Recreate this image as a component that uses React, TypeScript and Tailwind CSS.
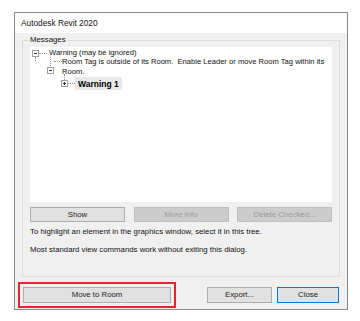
import React from 'react'

const font = { fontFamily: '"Liberation Sans", Arial, sans-serif' }

function Btn({ label, className = '' }: { label: string; className?: string }) {
  return (
    <div className={'flex items-center justify-center border text-[7.8px] leading-none ' + className}>
      {label}
    </div>
  )
}

function ExpandBox({ plus }: { plus?: boolean }) {
  return (
    <span className="relative inline-block w-[7px] h-[7px] border border-[#a0a0a0] bg-white shrink-0">
      <span className="absolute left-[1px] right-[1px] top-[2px] h-px bg-[#333]" />
      {plus && <span className="absolute top-[1px] bottom-[1px] left-[2px] w-px bg-[#333]" />}
    </span>
  )
}

export default function App() {
  return (
    <div className="w-[360px] h-[321px] bg-white pt-[12px] pl-[14px]" style={font}>
      <div className="w-[334px] h-[298px] border border-[#8a8a8a] flex flex-col">
        {/* Title bar */}
        <div className="h-[20px] bg-white flex items-center pl-[6px] text-[8.3px] text-[#111]">
          Autodesk Revit 2020
        </div>

        {/* Body */}
        <div className="flex-1 bg-[#f0f0f0] flex flex-col">
          {/* Messages group */}
          <div className="relative mt-[7px] mx-[7px] h-[237px] border border-[#dcdcdc] flex flex-col pl-[7px] pr-[7px]">
            <span className="absolute -top-[6px] left-[6px] bg-[#f0f0f0] px-px text-[7.8px] leading-[10px] text-[#111]">
              Messages
            </span>

            {/* Tree */}
            <div className="mt-[6px] h-[155px] bg-white relative text-[7.6px] leading-[10px] text-[#111]">
              {/* vertical connectors */}
              <span className="absolute left-[5px] top-[10px] h-[4px] border-l border-dotted border-[#999]" />
              <span className="absolute left-[20px] top-[10px] h-[9px] border-l border-dotted border-[#999]" />
              <span className="absolute left-[34px] top-[27px] h-[6px] border-l border-dotted border-[#999]" />

              <div className="absolute left-[2px] top-[1px] flex items-center">
                <ExpandBox />
                <span className="w-[8px] border-t border-dotted border-[#999]" />
                <span className="ml-[2px]">Warning (may be ignored)</span>
              </div>

              <div className="absolute left-[17px] top-[10px] flex">
                <div className="flex items-center mt-[8px] h-[10px]">
                  <ExpandBox />
                </div>
                <span className="w-[8px] mt-[4px] h-0 border-t border-dotted border-[#999]" />
                <span className="w-[266px]">
                  Room Tag is outside of its Room.&nbsp; Enable Leader or move Room Tag within its Room.
                </span>
              </div>

              <div className="absolute left-[31px] top-[30px] flex items-center">
                <ExpandBox plus />
                <span className="w-[7px] border-t border-dotted border-[#999]" />
                <span className="bg-[#e8e8e8] px-[3px] py-[1.5px] font-bold text-[8.5px] leading-[10px] text-black">
                  Warning 1
                </span>
              </div>
            </div>

            {/* Action buttons */}
            <div className="mt-[5px] flex justify-between">
              <Btn label="Show" className="w-[95px] h-[15px] bg-[#e1e1e1] border-[#adadad] text-[#222]" />
              <Btn label="More Info" className="w-[95px] h-[15px] bg-[#cccccc] border-[#bfbfbf] text-[#9a9a9a]" />
              <Btn label="Delete Checked..." className="w-[95px] h-[15px] bg-[#cccccc] border-[#bfbfbf] text-[#9a9a9a]" />
            </div>

            <p className="mt-[5px] text-[7.8px] leading-[10px] text-[#111]">
              To highlight an element in the graphics window, select it in this tree.
            </p>
            <p className="mt-[8px] text-[7.8px] leading-[10px] text-[#111]">
              Most standard view commands work without exiting this dialog.
            </p>
          </div>

          {/* Bottom buttons */}
          <div className="mt-[5px] flex items-center pl-[3px] pr-[7px]">
            <div className="border-2 border-[#e0262f] p-[3px]">
              <Btn label="Move to Room" className="w-[148px] h-[16px] bg-[#e1e1e1] border-[#adadad] text-[#222]" />
            </div>
            <Btn label="Export..." className="ml-[31px] w-[65px] h-[16px] bg-[#e1e1e1] border-[#adadad] text-[#222]" />
            <Btn label="Close" className="ml-[5px] w-[62px] h-[16px] bg-[#e1e1e1] border-[#0078d7] text-[#222]" />
          </div>
        </div>
      </div>
    </div>
  )
}
